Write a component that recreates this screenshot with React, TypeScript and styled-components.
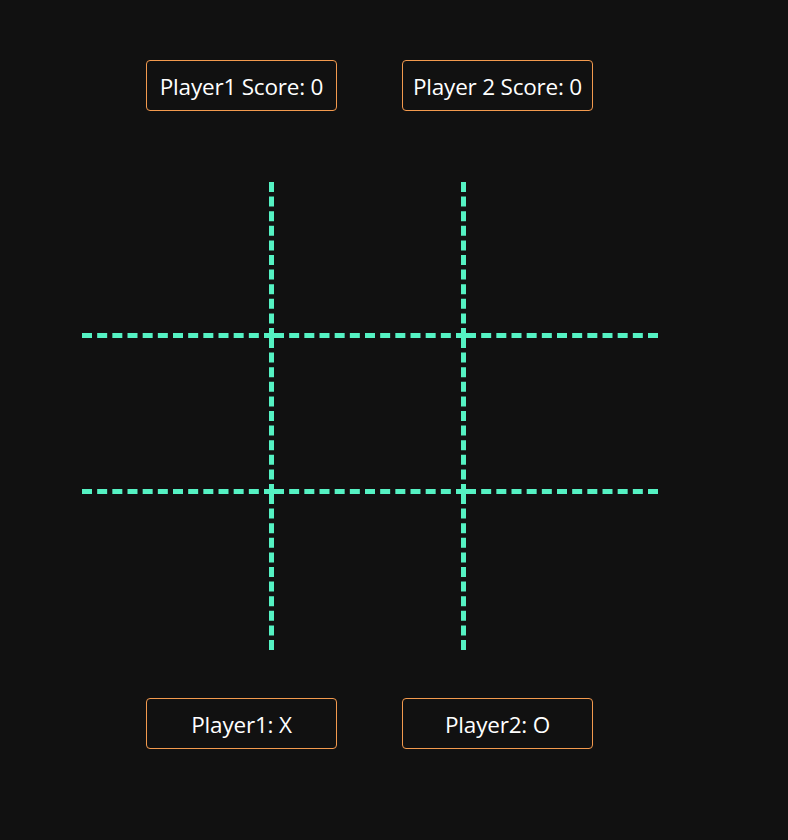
import React from "react";
import styled, { createGlobalStyle } from "styled-components";

const GlobalStyle = createGlobalStyle`
  html, body {
    margin: 0;
    padding: 0;
    background: #111111;
  }
  body {
    font-family: "Open Sans", "Noto Sans", "Liberation Sans", sans-serif;
    color: #ffffff;
  }
`;

const Page = styled.div`
  width: 739px;
  min-height: 840px;
  display: flex;
  flex-direction: column;
  align-items: center;
  padding-top: 60px;
  box-sizing: border-box;
`;

const InfoRow = styled.div`
  display: flex;
  gap: 65px;
`;

const InfoBox = styled.div`
  width: 191px;
  height: 51px;
  box-sizing: border-box;
  border: 1.5px solid #f39a4e;
  border-radius: 4px;
  display: flex;
  align-items: center;
  justify-content: center;
  padding-top: 2px;
  font-size: 22.5px;
  letter-spacing: -0.2px;
  color: #ffffff;
  white-space: nowrap;
`;

const Board = styled.div`
  margin-top: 71px;
  margin-bottom: 48px;
  width: 576px;
  height: 468px;
  display: grid;
  grid-template-columns: repeat(3, 1fr);
  grid-template-rows: repeat(3, 1fr);
`;

const Cell = styled.div<{ $right: boolean; $bottom: boolean }>`
  box-sizing: border-box;
  border-right: ${(p) => (p.$right ? "5px dashed #55f2c3" : "none")};
  border-bottom: ${(p) => (p.$bottom ? "5px dashed #55f2c3" : "none")};
`;

export default function App() {
  const cells = Array.from({ length: 9 }, (_, i) => i);
  return (
    <>
      <GlobalStyle />
      <Page>
        <InfoRow>
          <InfoBox>Player1 Score: 0</InfoBox>
          <InfoBox>Player 2 Score: 0</InfoBox>
        </InfoRow>
        <Board>
          {cells.map((i) => (
            <Cell key={i} $right={i % 3 !== 2} $bottom={i < 6} />
          ))}
        </Board>
        <InfoRow>
          <InfoBox>Player1: X</InfoBox>
          <InfoBox>Player2: O</InfoBox>
        </InfoRow>
      </Page>
    </>
  );
}
